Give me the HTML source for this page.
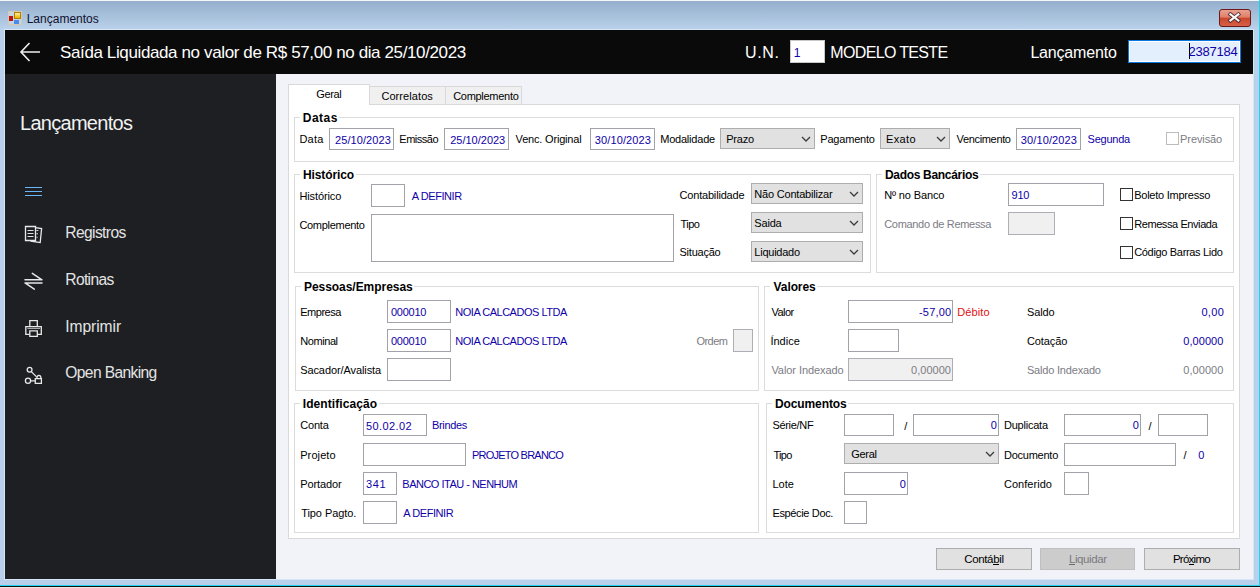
<!DOCTYPE html><html><head><meta charset="utf-8"><style>html,body{margin:0;padding:0;width:1260px;height:588px;overflow:hidden;position:relative;font-family:'Liberation Sans', sans-serif}</style></head><body><div style="position:absolute;left:0;top:0;width:1260px;height:588px;background:#b9d0ea"></div><div style="position:absolute;left:0;top:0;width:1260px;height:30px;background:linear-gradient(#93adcb,#bad2ea)"></div><div style="position:absolute;left:0px;top:0px;width:1260px;height:1px;background:#f4f6f8"></div><div style="position:absolute;left:1259px;top:0px;width:1px;height:586px;background:#22d3ee"></div><div style="position:absolute;left:0px;top:585px;width:1260px;height:1px;background:#22d3ee"></div><div style="position:absolute;left:0px;top:586px;width:1260px;height:2px;background:#111"></div><div style="position:absolute;left:0px;top:587px;width:1260px;height:1px;background:#e8e8e8"></div><div style="position:absolute;left:4px;top:29px;width:1250px;height:551px;background:#d6e6f6"></div><div style="position:absolute;left:8px;top:11px;width:14px;height:14px;border:1px solid #d8c8b0;box-sizing:border-box;background:#c4d4e4"></div><div style="position:absolute;left:14px;top:12px;width:7px;height:7px;background:linear-gradient(#fff0a0,#e8b000);border:1px solid #b08000;box-sizing:border-box"></div><div style="position:absolute;left:9px;top:16px;width:4px;height:5px;background:#c01010"></div><div style="position:absolute;left:14px;top:20px;width:5px;height:4px;background:#4a8ae8"></div><div style="position:absolute;left:1219px;top:9px;width:32px;height:18px;box-sizing:border-box;border:1px solid #6b1a1a;border-radius:3px;background:linear-gradient(#eaa090 0%,#e08068 45%,#c8462c 50%,#d86048 100%)"></div><svg style="position:absolute;left:1226px;top:11px" width="16" height="13" viewBox="0 0 16 13"><path d="M4.4 3.3 L12.4 9.5 M12.4 3.3 L4.4 9.5" stroke="#4a2a30" stroke-width="3.8" stroke-linecap="square"/><path d="M4.4 3.3 L12.4 9.5 M12.4 3.3 L4.4 9.5" stroke="#fafafa" stroke-width="2.1" stroke-linecap="square"/></svg><div style="position:absolute;left:5px;top:30px;width:1248px;height:44px;background:#0a0a0a"></div><svg style="position:absolute;left:18px;top:40px" width="24" height="24" viewBox="0 0 24 24"><path d="M22 12 H3 M11.5 3 L3 12 L11.5 21" stroke="#f0f0f0" stroke-width="1.6" fill="none"/></svg><div style="position:absolute;left:790px;top:40px;width:35px;height:23px;background:#fff;border:1px solid #c8c8c8;box-sizing:border-box"></div><div style="position:absolute;left:1128px;top:40px;width:113px;height:23px;background:#e3effd;border:1px solid #0a78e0;box-shadow:inset 0 0 0 1px #fff;box-sizing:border-box"></div><div style="position:absolute;left:1189px;top:43px;width:1px;height:16px;background:#000"></div><div style="position:absolute;left:5px;top:74px;width:271px;height:505px;background:#1d1f23"></div><div style="position:absolute;left:25px;top:187px;width:17px;height:1.4px;background:#6cb6f6"></div><div style="position:absolute;left:25px;top:191px;width:17px;height:1.4px;background:#6cb6f6"></div><div style="position:absolute;left:25px;top:195px;width:17px;height:1.4px;background:#6cb6f6"></div><svg style="position:absolute;left:20px;top:222px" width="28" height="24" viewBox="0 0 28 24"><path d="M5.5 4.5 H15.5 V18.5 H5.5 Z" stroke="#e8e8e8" stroke-width="1.3" fill="none"/><path d="M7.5 8.5 H13.5 M7.5 11.5 H13.5 M7.5 14.5 H13.5" stroke="#e0e0e0" stroke-width="1.2" fill="none"/><path d="M15.5 5.6 L21.6 6.6 L20.2 20.6 L10.5 19" stroke="#e8e8e8" stroke-width="1.3" fill="none"/><path d="M16.4 8.5 H18.4 M16.4 11.8 H18 M16.4 15.2 H17.6" stroke="#d8d8d8" stroke-width="1.1" fill="none"/></svg><svg style="position:absolute;left:20px;top:268px" width="28" height="24" viewBox="0 0 28 24"><path d="M5 11.8 H22 M21.6 11.6 L12.3 5.3 M22 15 H5 M5.4 15.2 L14.3 21.2" stroke="#e8e8e8" stroke-width="1.5" fill="none" stroke-linecap="round"/></svg><svg style="position:absolute;left:20px;top:316px" width="28" height="24" viewBox="0 0 28 24"><path d="M9.8 10.5 V4.6 H17.3 V10.5" stroke="#e8e8e8" stroke-width="1.3" fill="none"/><path d="M9.5 18.4 H5.8 V10.7 H21.3 V18.4 H17.5" stroke="#e8e8e8" stroke-width="1.3" fill="none"/><path d="M9.8 14.8 H17.3 V20.4 H9.8 Z" stroke="#e8e8e8" stroke-width="1.3" fill="none"/><path d="M7.5 12.4 H20" stroke="#cfcfcf" stroke-width="0.9" fill="none"/></svg><svg style="position:absolute;left:20px;top:363px" width="28" height="24" viewBox="0 0 28 24"><circle cx="9.6" cy="6.7" r="2.4" stroke="#e8e8e8" stroke-width="1.3" fill="none"/><circle cx="8" cy="17.8" r="2.6" stroke="#e8e8e8" stroke-width="1.3" fill="none"/><path d="M11.3 8.6 L16.3 13.6 M10.6 17.8 H15.3 M15.3 15.6 H21.4 V20.4 H15.3 Z M16.8 15.5 Q16.8 12.3 19 12.3 Q21 12.3 21 15.5" stroke="#e8e8e8" stroke-width="1.3" fill="none"/></svg><div style="position:absolute;left:276px;top:74px;width:977px;height:505px;background:#f2f3f8"></div><div style="position:absolute;left:369px;top:86px;width:77px;height:19px;background:#f0f0f0;border:1px solid #d9d9d9;border-bottom:none;box-sizing:border-box"></div><div style="position:absolute;left:445px;top:86px;width:77px;height:19px;background:#f0f0f0;border:1px solid #d9d9d9;border-bottom:none;box-sizing:border-box"></div><div style="position:absolute;left:288px;top:104px;width:952px;height:435px;background:#fff;border:1px solid #d9d9d9;box-sizing:border-box"></div><div style="position:absolute;left:288px;top:84px;width:82px;height:21px;background:#fff;border:1px solid #d9d9d9;border-bottom:none;box-sizing:border-box"></div><div style="position:absolute;left:294px;top:117px;width:940px;height:45px;border:1px solid #dcdcdc;box-sizing:border-box"></div><div style="position:absolute;left:300.1px;top:116px;width:38.89999999999998px;height:3px;background:#fff"></div><div style="position:absolute;left:329px;top:128px;width:65px;height:22px;border:1px solid #a2a2a8;background:#fff;box-sizing:border-box"></div><div style="position:absolute;left:444px;top:128px;width:65px;height:22px;border:1px solid #a2a2a8;background:#fff;box-sizing:border-box"></div><div style="position:absolute;left:590px;top:128px;width:65px;height:22px;border:1px solid #a2a2a8;background:#fff;box-sizing:border-box"></div><div style="position:absolute;left:720px;top:128px;width:95px;height:21px;border:1px solid #adadad;background:#e1e1e1;box-sizing:border-box"></div><svg style="position:absolute;left:801px;top:136.0px" width="10" height="6" viewBox="0 0 10 6"><path d="M1 1 L5 5 L9 1" stroke="#3c3c3c" stroke-width="1.25" fill="none"/></svg><div style="position:absolute;left:880px;top:128px;width:70px;height:21px;border:1px solid #adadad;background:#e1e1e1;box-sizing:border-box"></div><svg style="position:absolute;left:936px;top:136.0px" width="10" height="6" viewBox="0 0 10 6"><path d="M1 1 L5 5 L9 1" stroke="#3c3c3c" stroke-width="1.25" fill="none"/></svg><div style="position:absolute;left:1016px;top:128px;width:65px;height:22px;border:1px solid #a2a2a8;background:#fff;box-sizing:border-box"></div><div style="position:absolute;left:1166px;top:132px;width:13px;height:13px;border:1px solid #bcbcbc;background:#fff;box-sizing:border-box"></div><div style="position:absolute;left:294px;top:174px;width:577px;height:99px;border:1px solid #dcdcdc;box-sizing:border-box"></div><div style="position:absolute;left:300.3px;top:173px;width:55.599999999999966px;height:3px;background:#fff"></div><div style="position:absolute;left:371px;top:184px;width:34px;height:23px;border:1px solid #a2a2a8;background:#fff;box-sizing:border-box"></div><div style="position:absolute;left:371px;top:214px;width:303px;height:48px;border:1px solid #a2a2a8;background:#fff;box-sizing:border-box"></div><div style="position:absolute;left:751px;top:183px;width:112px;height:21px;border:1px solid #adadad;background:#e1e1e1;box-sizing:border-box"></div><svg style="position:absolute;left:849px;top:191.0px" width="10" height="6" viewBox="0 0 10 6"><path d="M1 1 L5 5 L9 1" stroke="#3c3c3c" stroke-width="1.25" fill="none"/></svg><div style="position:absolute;left:751px;top:212px;width:112px;height:21px;border:1px solid #adadad;background:#e1e1e1;box-sizing:border-box"></div><svg style="position:absolute;left:849px;top:220.0px" width="10" height="6" viewBox="0 0 10 6"><path d="M1 1 L5 5 L9 1" stroke="#3c3c3c" stroke-width="1.25" fill="none"/></svg><div style="position:absolute;left:751px;top:241px;width:112px;height:21px;border:1px solid #adadad;background:#e1e1e1;box-sizing:border-box"></div><svg style="position:absolute;left:849px;top:249.0px" width="10" height="6" viewBox="0 0 10 6"><path d="M1 1 L5 5 L9 1" stroke="#3c3c3c" stroke-width="1.25" fill="none"/></svg><div style="position:absolute;left:876px;top:174px;width:358px;height:99px;border:1px solid #dcdcdc;box-sizing:border-box"></div><div style="position:absolute;left:882.2px;top:173px;width:98.19999999999993px;height:3px;background:#fff"></div><div style="position:absolute;left:1008px;top:183px;width:96px;height:23px;border:1px solid #a2a2a8;background:#fff;box-sizing:border-box"></div><div style="position:absolute;left:1008px;top:212px;width:47px;height:23px;border:1px solid #aeaeb4;background:#f0f0f0;box-sizing:border-box"></div><div style="position:absolute;left:1120px;top:188px;width:13px;height:13px;border:1px solid #333;background:#fff;box-sizing:border-box"></div><div style="position:absolute;left:1120px;top:217px;width:13px;height:13px;border:1px solid #333;background:#fff;box-sizing:border-box"></div><div style="position:absolute;left:1120px;top:246px;width:13px;height:13px;border:1px solid #333;background:#fff;box-sizing:border-box"></div><div style="position:absolute;left:295px;top:286px;width:464px;height:105px;border:1px solid #dcdcdc;box-sizing:border-box"></div><div style="position:absolute;left:301.3px;top:285px;width:112.69999999999999px;height:3px;background:#fff"></div><div style="position:absolute;left:387px;top:300px;width:64px;height:23px;border:1px solid #a2a2a8;background:#fff;box-sizing:border-box"></div><div style="position:absolute;left:387px;top:329px;width:64px;height:23px;border:1px solid #a2a2a8;background:#fff;box-sizing:border-box"></div><div style="position:absolute;left:733px;top:329px;width:20px;height:23px;border:1px solid #aeaeb4;background:#f0f0f0;box-sizing:border-box"></div><div style="position:absolute;left:387px;top:358px;width:64px;height:23px;border:1px solid #a2a2a8;background:#fff;box-sizing:border-box"></div><div style="position:absolute;left:764px;top:286px;width:470px;height:105px;border:1px solid #dcdcdc;box-sizing:border-box"></div><div style="position:absolute;left:769.9px;top:285px;width:47.39999999999998px;height:3px;background:#fff"></div><div style="position:absolute;left:848px;top:300px;width:105px;height:23px;border:1px solid #a2a2a8;background:#fff;box-sizing:border-box"></div><div style="position:absolute;left:848px;top:329px;width:51px;height:23px;border:1px solid #a2a2a8;background:#fff;box-sizing:border-box"></div><div style="position:absolute;left:848px;top:358px;width:105px;height:23px;border:1px solid #aeaeb4;background:#f0f0f0;box-sizing:border-box"></div><div style="position:absolute;left:294px;top:403px;width:465px;height:130px;border:1px solid #dcdcdc;box-sizing:border-box"></div><div style="position:absolute;left:300.1px;top:402px;width:78.89999999999998px;height:3px;background:#fff"></div><div style="position:absolute;left:363px;top:414px;width:64px;height:22px;border:1px solid #a2a2a8;background:#fff;box-sizing:border-box"></div><div style="position:absolute;left:363px;top:443px;width:103px;height:23px;border:1px solid #a2a2a8;background:#fff;box-sizing:border-box"></div><div style="position:absolute;left:363px;top:472px;width:34px;height:23px;border:1px solid #a2a2a8;background:#fff;box-sizing:border-box"></div><div style="position:absolute;left:363px;top:501px;width:34px;height:23px;border:1px solid #a2a2a8;background:#fff;box-sizing:border-box"></div><div style="position:absolute;left:766px;top:403px;width:468px;height:130px;border:1px solid #dcdcdc;box-sizing:border-box"></div><div style="position:absolute;left:772.2px;top:402px;width:76.0px;height:3px;background:#fff"></div><div style="position:absolute;left:844px;top:414px;width:50px;height:22px;border:1px solid #a2a2a8;background:#fff;box-sizing:border-box"></div><div style="position:absolute;left:913px;top:414px;width:86px;height:22px;border:1px solid #a2a2a8;background:#fff;box-sizing:border-box"></div><div style="position:absolute;left:1064px;top:414px;width:77px;height:22px;border:1px solid #a2a2a8;background:#fff;box-sizing:border-box"></div><div style="position:absolute;left:1158px;top:414px;width:50px;height:22px;border:1px solid #a2a2a8;background:#fff;box-sizing:border-box"></div><div style="position:absolute;left:844px;top:443px;width:155px;height:21px;border:1px solid #adadad;background:#e1e1e1;box-sizing:border-box"></div><svg style="position:absolute;left:985px;top:451.0px" width="10" height="6" viewBox="0 0 10 6"><path d="M1 1 L5 5 L9 1" stroke="#3c3c3c" stroke-width="1.25" fill="none"/></svg><div style="position:absolute;left:1064px;top:443px;width:112px;height:23px;border:1px solid #a2a2a8;background:#fff;box-sizing:border-box"></div><div style="position:absolute;left:844px;top:472px;width:64px;height:23px;border:1px solid #a2a2a8;background:#fff;box-sizing:border-box"></div><div style="position:absolute;left:1064px;top:472px;width:25px;height:23px;border:1px solid #a2a2a8;background:#fff;box-sizing:border-box"></div><div style="position:absolute;left:844px;top:501px;width:23px;height:23px;border:1px solid #a2a2a8;background:#fff;box-sizing:border-box"></div><div style="position:absolute;left:936px;top:548px;width:96px;height:22px;border:1px solid #adadad;background:#e1e1e1;box-sizing:border-box"></div><div style="position:absolute;left:993px;top:564px;width:6px;height:1px;background:#000"></div><div style="position:absolute;left:1040px;top:548px;width:95px;height:22px;border:1px solid #bfbfbf;background:#cccccc;box-sizing:border-box"></div><div style="position:absolute;left:1069px;top:564px;width:6px;height:1px;background:#6a6a6a"></div><div style="position:absolute;left:1144px;top:548px;width:96px;height:22px;border:1px solid #adadad;background:#e1e1e1;box-sizing:border-box"></div><div style="position:absolute;left:1189px;top:564px;width:5px;height:1px;background:#000"></div><span id="t0" style="position:absolute;left:26.70px;top:12.84px;font-size:12px;line-height:12px;font-weight:400;color:#101030;letter-spacing:0.000px;white-space:pre;">Lançamentos</span><span id="t1" style="position:absolute;left:60.00px;top:43.61px;font-size:17px;line-height:17px;font-weight:400;color:#fff;letter-spacing:-0.379px;white-space:pre;">Saída Liquidada no valor de R$ 57,00 no dia 25/10/2023</span><span id="t2" style="position:absolute;left:745.00px;top:45.15px;font-size:16px;line-height:16px;font-weight:400;color:#fff;letter-spacing:0.667px;white-space:pre;">U.N.</span><span id="t3" style="position:absolute;left:793.70px;top:46.84px;font-size:12px;line-height:12px;font-weight:400;color:#1000a8;letter-spacing:0.000px;white-space:pre;">1</span><span id="t4" style="position:absolute;left:830.30px;top:45.05px;font-size:16px;line-height:16px;font-weight:400;color:#fff;letter-spacing:-0.655px;white-space:pre;">MODELO TESTE</span><span id="t5" style="position:absolute;left:1030.40px;top:44.95px;font-size:16px;line-height:16px;font-weight:400;color:#fff;letter-spacing:-0.178px;white-space:pre;">Lançamento</span><span id="t6" style="position:absolute;left:1188.50px;top:44.99px;font-size:13px;line-height:13px;font-weight:400;color:#1000a8;letter-spacing:-0.250px;white-space:pre;">2387184</span><span id="t7" style="position:absolute;left:20.00px;top:112.87px;font-size:20px;line-height:20px;font-weight:400;color:#f2f2f2;letter-spacing:-0.720px;white-space:pre;">Lançamentos</span><span id="t8" style="position:absolute;left:65.30px;top:224.79px;font-size:15.6px;line-height:15.6px;font-weight:400;color:#e4e4e4;letter-spacing:-0.612px;white-space:pre;">Registros</span><span id="t9" style="position:absolute;left:65.30px;top:271.79px;font-size:15.6px;line-height:15.6px;font-weight:400;color:#e4e4e4;letter-spacing:-0.650px;white-space:pre;">Rotinas</span><span id="t10" style="position:absolute;left:65.30px;top:318.99px;font-size:15.6px;line-height:15.6px;font-weight:400;color:#e4e4e4;letter-spacing:-0.071px;white-space:pre;">Imprimir</span><span id="t11" style="position:absolute;left:65.30px;top:365.49px;font-size:15.6px;line-height:15.6px;font-weight:400;color:#e4e4e4;letter-spacing:-0.627px;white-space:pre;">Open Banking</span><span id="t12" style="position:absolute;left:316.30px;top:89.19px;font-size:11px;line-height:11px;font-weight:400;color:#000;letter-spacing:-0.350px;white-space:pre;">Geral</span><span id="t13" style="position:absolute;left:381.40px;top:91.19px;font-size:11px;line-height:11px;font-weight:400;color:#000;letter-spacing:0.078px;white-space:pre;">Correlatos</span><span id="t14" style="position:absolute;left:453.20px;top:91.19px;font-size:11px;line-height:11px;font-weight:400;color:#000;letter-spacing:-0.290px;white-space:pre;">Complemento</span><span id="t15" style="position:absolute;left:302.80px;top:111.84px;font-size:12px;line-height:12px;font-weight:700;color:#000;letter-spacing:0.475px;white-space:pre;">Datas</span><span id="t16" style="position:absolute;left:299.40px;top:133.69px;font-size:11px;line-height:11px;font-weight:400;color:#000;letter-spacing:0.267px;white-space:pre;">Data</span><span id="t17" style="position:absolute;left:335.10px;top:134.99px;font-size:11px;line-height:11px;font-weight:400;color:#1000a8;letter-spacing:0.067px;white-space:pre;">25/10/2023</span><span id="t18" style="position:absolute;left:399.30px;top:133.69px;font-size:11px;line-height:11px;font-weight:400;color:#000;letter-spacing:-0.483px;white-space:pre;">Emissão</span><span id="t19" style="position:absolute;left:450.20px;top:134.99px;font-size:11px;line-height:11px;font-weight:400;color:#1000a8;letter-spacing:0.000px;white-space:pre;">25/10/2023</span><span id="t20" style="position:absolute;left:515.60px;top:133.69px;font-size:11px;line-height:11px;font-weight:400;color:#000;letter-spacing:-0.185px;white-space:pre;">Venc. Original</span><span id="t21" style="position:absolute;left:594.80px;top:134.99px;font-size:11px;line-height:11px;font-weight:400;color:#1000a8;letter-spacing:0.111px;white-space:pre;">30/10/2023</span><span id="t22" style="position:absolute;left:660.20px;top:133.69px;font-size:11px;line-height:11px;font-weight:400;color:#000;letter-spacing:-0.211px;white-space:pre;">Modalidade</span><span id="t23" style="position:absolute;left:726.20px;top:133.69px;font-size:11px;line-height:11px;font-weight:400;color:#000;letter-spacing:-0.175px;white-space:pre;">Prazo</span><span id="t24" style="position:absolute;left:820.30px;top:133.69px;font-size:11px;line-height:11px;font-weight:400;color:#000;letter-spacing:-0.200px;white-space:pre;">Pagamento</span><span id="t25" style="position:absolute;left:886.00px;top:133.69px;font-size:11px;line-height:11px;font-weight:400;color:#000;letter-spacing:0.350px;white-space:pre;">Exato</span><span id="t26" style="position:absolute;left:956.60px;top:133.69px;font-size:11px;line-height:11px;font-weight:400;color:#000;letter-spacing:-0.344px;white-space:pre;">Vencimento</span><span id="t27" style="position:absolute;left:1020.70px;top:134.99px;font-size:11px;line-height:11px;font-weight:400;color:#1000a8;letter-spacing:0.133px;white-space:pre;">30/10/2023</span><span id="t28" style="position:absolute;left:1087.60px;top:133.69px;font-size:11px;line-height:11px;font-weight:400;color:#1000a8;letter-spacing:-0.250px;white-space:pre;">Segunda</span><span id="t29" style="position:absolute;left:1180.10px;top:133.69px;font-size:11px;line-height:11px;font-weight:400;color:#7c7c84;letter-spacing:-0.100px;white-space:pre;">Previsão</span><span id="t30" style="position:absolute;left:303.00px;top:168.84px;font-size:12px;line-height:12px;font-weight:700;color:#000;letter-spacing:-0.125px;white-space:pre;">Histórico</span><span id="t31" style="position:absolute;left:299.40px;top:190.99px;font-size:11px;line-height:11px;font-weight:400;color:#000;letter-spacing:-0.112px;white-space:pre;">Histórico</span><span id="t32" style="position:absolute;left:411.80px;top:191.19px;font-size:11px;line-height:11px;font-weight:400;color:#1000a8;letter-spacing:-0.425px;white-space:pre;">A DEFINIR</span><span id="t33" style="position:absolute;left:299.40px;top:219.89px;font-size:11px;line-height:11px;font-weight:400;color:#000;letter-spacing:-0.290px;white-space:pre;">Complemento</span><span id="t34" style="position:absolute;left:679.50px;top:189.69px;font-size:11px;line-height:11px;font-weight:400;color:#000;letter-spacing:-0.183px;white-space:pre;">Contabilidade</span><span id="t35" style="position:absolute;left:754.30px;top:188.69px;font-size:11px;line-height:11px;font-weight:400;color:#000;letter-spacing:-0.200px;white-space:pre;">Não Contabilizar</span><span id="t36" style="position:absolute;left:680.50px;top:218.89px;font-size:11px;line-height:11px;font-weight:400;color:#000;letter-spacing:-0.533px;white-space:pre;">Tipo</span><span id="t37" style="position:absolute;left:754.30px;top:217.69px;font-size:11px;line-height:11px;font-weight:400;color:#000;letter-spacing:-0.175px;white-space:pre;">Saida</span><span id="t38" style="position:absolute;left:679.50px;top:247.39px;font-size:11px;line-height:11px;font-weight:400;color:#000;letter-spacing:-0.229px;white-space:pre;">Situação</span><span id="t39" style="position:absolute;left:754.30px;top:246.69px;font-size:11px;line-height:11px;font-weight:400;color:#000;letter-spacing:-0.238px;white-space:pre;">Liquidado</span><span id="t40" style="position:absolute;left:884.90px;top:168.84px;font-size:12px;line-height:12px;font-weight:700;color:#000;letter-spacing:-0.300px;white-space:pre;">Dados Bancários</span><span id="t41" style="position:absolute;left:884.20px;top:189.89px;font-size:11px;line-height:11px;font-weight:400;color:#000;letter-spacing:-0.130px;white-space:pre;">Nº no Banco</span><span id="t42" style="position:absolute;left:1011.60px;top:189.69px;font-size:11px;line-height:11px;font-weight:400;color:#1000a8;letter-spacing:-0.300px;white-space:pre;">910</span><span id="t43" style="position:absolute;left:884.20px;top:218.59px;font-size:11px;line-height:11px;font-weight:400;color:#7c7c84;letter-spacing:-0.312px;white-space:pre;">Comando de Remessa</span><span id="t44" style="position:absolute;left:1134.20px;top:189.89px;font-size:11px;line-height:11px;font-weight:400;color:#000;letter-spacing:-0.243px;white-space:pre;">Boleto Impresso</span><span id="t45" style="position:absolute;left:1134.20px;top:218.59px;font-size:11px;line-height:11px;font-weight:400;color:#000;letter-spacing:-0.414px;white-space:pre;">Remessa Enviada</span><span id="t46" style="position:absolute;left:1134.20px;top:247.29px;font-size:11px;line-height:11px;font-weight:400;color:#000;letter-spacing:-0.324px;white-space:pre;">Código Barras Lido</span><span id="t47" style="position:absolute;left:304.00px;top:280.84px;font-size:12px;line-height:12px;font-weight:700;color:#000;letter-spacing:-0.047px;white-space:pre;">Pessoas/Empresas</span><span id="t48" style="position:absolute;left:300.20px;top:306.89px;font-size:11px;line-height:11px;font-weight:400;color:#000;letter-spacing:-0.467px;white-space:pre;">Empresa</span><span id="t49" style="position:absolute;left:390.90px;top:306.69px;font-size:11px;line-height:11px;font-weight:400;color:#1000a8;letter-spacing:-0.240px;white-space:pre;">000010</span><span id="t50" style="position:absolute;left:455.30px;top:306.89px;font-size:11px;line-height:11px;font-weight:400;color:#1000a8;letter-spacing:-0.488px;white-space:pre;">NOIA CALCADOS LTDA</span><span id="t51" style="position:absolute;left:300.20px;top:336.09px;font-size:11px;line-height:11px;font-weight:400;color:#000;letter-spacing:-0.417px;white-space:pre;">Nominal</span><span id="t52" style="position:absolute;left:390.90px;top:335.69px;font-size:11px;line-height:11px;font-weight:400;color:#1000a8;letter-spacing:-0.240px;white-space:pre;">000010</span><span id="t53" style="position:absolute;left:455.30px;top:336.09px;font-size:11px;line-height:11px;font-weight:400;color:#1000a8;letter-spacing:-0.488px;white-space:pre;">NOIA CALCADOS LTDA</span><span id="t54" style="position:absolute;left:696.40px;top:336.09px;font-size:11px;line-height:11px;font-weight:400;color:#7c7c84;letter-spacing:-0.500px;white-space:pre;">Ordem</span><span id="t55" style="position:absolute;left:300.20px;top:364.79px;font-size:11px;line-height:11px;font-weight:400;color:#000;letter-spacing:-0.093px;white-space:pre;">Sacador/Avalista</span><span id="t56" style="position:absolute;left:773.60px;top:280.84px;font-size:12px;line-height:12px;font-weight:700;color:#000;letter-spacing:-0.100px;white-space:pre;">Valores</span><span id="t57" style="position:absolute;left:771.40px;top:306.89px;font-size:11px;line-height:11px;font-weight:400;color:#000;letter-spacing:-0.500px;white-space:pre;">Valor</span><span id="t58" style="position:absolute;left:919.00px;top:306.69px;font-size:11px;line-height:11px;font-weight:400;color:#1000a8;letter-spacing:0.200px;white-space:pre;">-57,00</span><span id="t59" style="position:absolute;left:957.20px;top:306.89px;font-size:11px;line-height:11px;font-weight:400;color:#e01010;letter-spacing:0.140px;white-space:pre;">Débito</span><span id="t60" style="position:absolute;left:1026.90px;top:307.19px;font-size:11px;line-height:11px;font-weight:400;color:#000;letter-spacing:-0.100px;white-space:pre;">Saldo</span><span id="t61" style="position:absolute;left:1201.40px;top:307.19px;font-size:11px;line-height:11px;font-weight:400;color:#1000a8;letter-spacing:0.333px;white-space:pre;">0,00</span><span id="t62" style="position:absolute;left:770.40px;top:336.09px;font-size:11px;line-height:11px;font-weight:400;color:#000;letter-spacing:0.000px;white-space:pre;">Índice</span><span id="t63" style="position:absolute;left:1026.90px;top:336.19px;font-size:11px;line-height:11px;font-weight:400;color:#000;letter-spacing:-0.067px;white-space:pre;">Cotação</span><span id="t64" style="position:absolute;left:1183.30px;top:336.19px;font-size:11px;line-height:11px;font-weight:400;color:#1000a8;letter-spacing:0.050px;white-space:pre;">0,00000</span><span id="t65" style="position:absolute;left:771.40px;top:364.79px;font-size:11px;line-height:11px;font-weight:400;color:#7c7c84;letter-spacing:-0.069px;white-space:pre;">Valor Indexado</span><span id="t66" style="position:absolute;left:911.00px;top:365.09px;font-size:11px;line-height:11px;font-weight:400;color:#7c7c84;letter-spacing:0.033px;white-space:pre;">0,00000</span><span id="t67" style="position:absolute;left:1026.90px;top:365.09px;font-size:11px;line-height:11px;font-weight:400;color:#7c7c84;letter-spacing:-0.185px;white-space:pre;">Saldo Indexado</span><span id="t68" style="position:absolute;left:1183.30px;top:365.09px;font-size:11px;line-height:11px;font-weight:400;color:#7c7c84;letter-spacing:0.050px;white-space:pre;">0,00000</span><span id="t69" style="position:absolute;left:302.80px;top:397.84px;font-size:12px;line-height:12px;font-weight:700;color:#000;letter-spacing:0.075px;white-space:pre;">Identificação</span><span id="t70" style="position:absolute;left:300.20px;top:420.29px;font-size:11px;line-height:11px;font-weight:400;color:#000;letter-spacing:-0.175px;white-space:pre;">Conta</span><span id="t71" style="position:absolute;left:366.00px;top:420.69px;font-size:11px;line-height:11px;font-weight:400;color:#1000a8;letter-spacing:0.386px;white-space:pre;">50.02.02</span><span id="t72" style="position:absolute;left:431.90px;top:420.29px;font-size:11px;line-height:11px;font-weight:400;color:#1000a8;letter-spacing:-0.317px;white-space:pre;">Brindes</span><span id="t73" style="position:absolute;left:300.20px;top:450.09px;font-size:11px;line-height:11px;font-weight:400;color:#000;letter-spacing:0.100px;white-space:pre;">Projeto</span><span id="t74" style="position:absolute;left:472.00px;top:450.09px;font-size:11px;line-height:11px;font-weight:400;color:#1000a8;letter-spacing:-0.777px;white-space:pre;">PROJETO BRANCO</span><span id="t75" style="position:absolute;left:300.20px;top:478.89px;font-size:11px;line-height:11px;font-weight:400;color:#000;letter-spacing:-0.086px;white-space:pre;">Portador</span><span id="t76" style="position:absolute;left:366.10px;top:478.89px;font-size:11px;line-height:11px;font-weight:400;color:#1000a8;letter-spacing:0.550px;white-space:pre;">341</span><span id="t77" style="position:absolute;left:402.30px;top:478.89px;font-size:11px;line-height:11px;font-weight:400;color:#1000a8;letter-spacing:-0.506px;white-space:pre;">BANCO ITAU - NENHUM</span><span id="t78" style="position:absolute;left:301.20px;top:507.69px;font-size:11px;line-height:11px;font-weight:400;color:#000;letter-spacing:-0.070px;white-space:pre;">Tipo Pagto.</span><span id="t79" style="position:absolute;left:403.30px;top:507.69px;font-size:11px;line-height:11px;font-weight:400;color:#1000a8;letter-spacing:-0.425px;white-space:pre;">A DEFINIR</span><span id="t80" style="position:absolute;left:774.90px;top:397.84px;font-size:12px;line-height:12px;font-weight:700;color:#000;letter-spacing:-0.089px;white-space:pre;">Documentos</span><span id="t81" style="position:absolute;left:772.40px;top:420.29px;font-size:11px;line-height:11px;font-weight:400;color:#000;letter-spacing:-0.300px;white-space:pre;">Série/NF</span><span id="t82" style="position:absolute;left:904.30px;top:420.69px;font-size:11px;line-height:11px;font-weight:400;color:#000;letter-spacing:0.000px;white-space:pre;">/</span><span id="t83" style="position:absolute;left:990.70px;top:420.29px;font-size:11px;line-height:11px;font-weight:400;color:#1000a8;letter-spacing:0.000px;white-space:pre;">0</span><span id="t84" style="position:absolute;left:1004.00px;top:419.99px;font-size:11px;line-height:11px;font-weight:400;color:#000;letter-spacing:-0.225px;white-space:pre;">Duplicata</span><span id="t85" style="position:absolute;left:1132.70px;top:420.29px;font-size:11px;line-height:11px;font-weight:400;color:#1000a8;letter-spacing:0.000px;white-space:pre;">0</span><span id="t86" style="position:absolute;left:1148.60px;top:420.69px;font-size:11px;line-height:11px;font-weight:400;color:#000;letter-spacing:0.000px;white-space:pre;">/</span><span id="t87" style="position:absolute;left:773.40px;top:450.09px;font-size:11px;line-height:11px;font-weight:400;color:#000;letter-spacing:-0.667px;white-space:pre;">Tipo</span><span id="t88" style="position:absolute;left:851.30px;top:449.19px;font-size:11px;line-height:11px;font-weight:400;color:#000;letter-spacing:-0.325px;white-space:pre;">Geral</span><span id="t89" style="position:absolute;left:1004.00px;top:450.09px;font-size:11px;line-height:11px;font-weight:400;color:#000;letter-spacing:-0.250px;white-space:pre;">Documento</span><span id="t90" style="position:absolute;left:1183.40px;top:450.09px;font-size:11px;line-height:11px;font-weight:400;color:#000;letter-spacing:0.000px;white-space:pre;">/</span><span id="t91" style="position:absolute;left:1198.30px;top:450.09px;font-size:11px;line-height:11px;font-weight:400;color:#1000a8;letter-spacing:0.000px;white-space:pre;">0</span><span id="t92" style="position:absolute;left:772.40px;top:478.89px;font-size:11px;line-height:11px;font-weight:400;color:#000;letter-spacing:-0.000px;white-space:pre;">Lote</span><span id="t93" style="position:absolute;left:899.70px;top:478.89px;font-size:11px;line-height:11px;font-weight:400;color:#1000a8;letter-spacing:0.000px;white-space:pre;">0</span><span id="t94" style="position:absolute;left:1004.00px;top:478.89px;font-size:11px;line-height:11px;font-weight:400;color:#000;letter-spacing:0.025px;white-space:pre;">Conferido</span><span id="t95" style="position:absolute;left:772.40px;top:507.69px;font-size:11px;line-height:11px;font-weight:400;color:#000;letter-spacing:-0.345px;white-space:pre;">Espécie Doc.</span><span id="t96" style="position:absolute;left:964.20px;top:554.26px;font-size:11.5px;line-height:11.5px;font-weight:400;color:#000;letter-spacing:-0.343px;white-space:pre;">Contábil</span><span id="t97" style="position:absolute;left:1068.90px;top:554.26px;font-size:11.5px;line-height:11.5px;font-weight:400;color:#7a7a80;letter-spacing:-0.386px;white-space:pre;">Liquidar</span><span id="t98" style="position:absolute;left:1172.90px;top:554.26px;font-size:11.5px;line-height:11.5px;font-weight:400;color:#000;letter-spacing:-0.733px;white-space:pre;">Próximo</span></body></html>
